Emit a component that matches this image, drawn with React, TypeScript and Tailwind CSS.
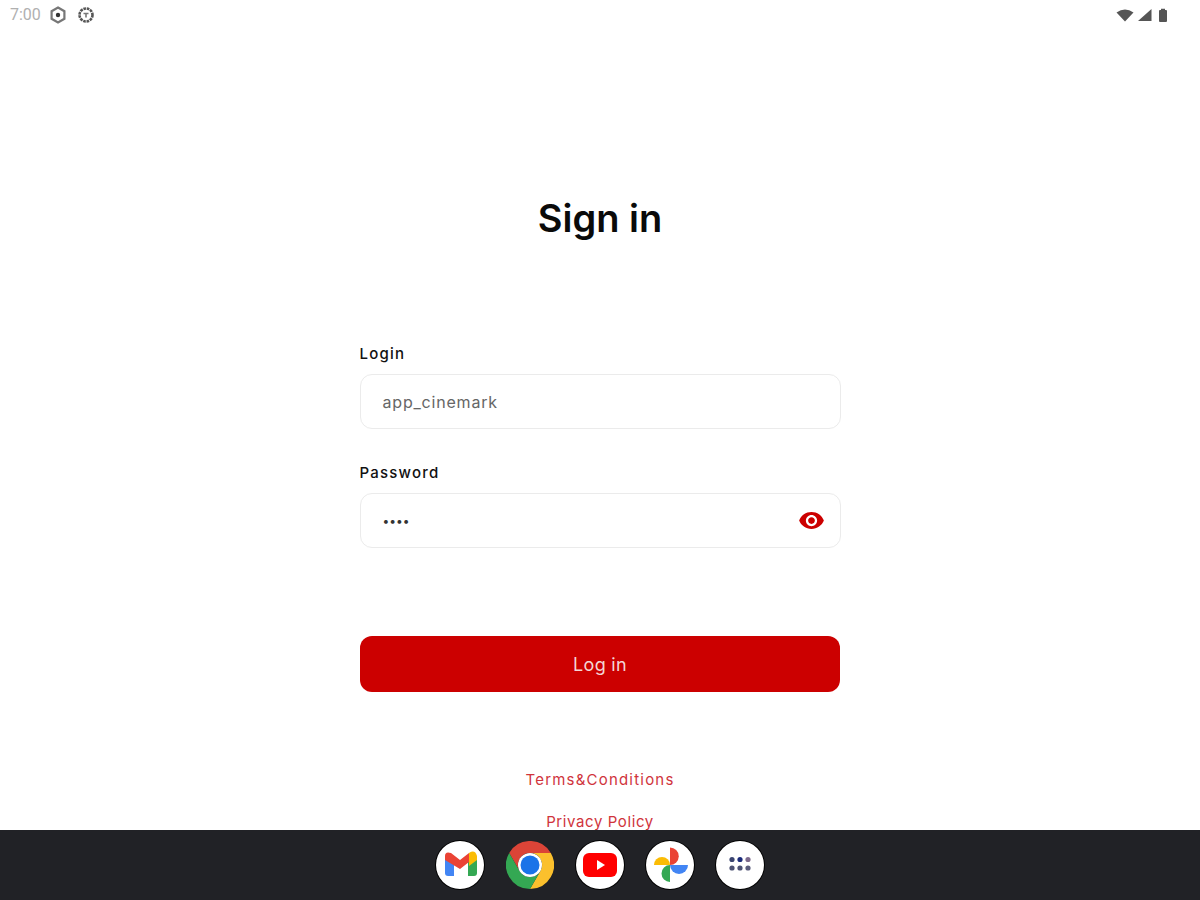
import { MdVisibility } from "react-icons/md";

const fontClass = "font-['Inter','Noto_Sans',sans-serif]";

const StatusBar = () => (
  <div className="flex h-[30px] shrink-0 items-center justify-between pl-[10px] pr-[32px]">
    <div className="flex items-center">
      <span className="w-[32px] text-[16px] text-[#b0b0b0] font-['Roboto',sans-serif]">7:00</span>
      <svg width="18" height="18" viewBox="0 0 18 18" className="ml-[7px]">
        <path d="M9 1.500l6.400 3.700v7.600L9 16.500l-6.400-3.700V5.200z" fill="none" stroke="#777" strokeWidth="2.200" />
        <circle cx="9" cy="9" r="2.200" fill="#333" />
      </svg>
      <svg width="18" height="18" viewBox="0 0 18 18" className="ml-[10px]">
        <circle cx="9" cy="9" r="6.500" fill="none" stroke="#555" strokeWidth="2.600" strokeDasharray="2.600 0.800" />
        <path d="M6.500 7.500h5M9 7.500v4" stroke="#777" strokeWidth="1.600" fill="none" />
      </svg>
    </div>
    <div className="flex items-center">
      <svg width="18" height="14" viewBox="0 0 18 14">
        <path d="M0.500 4.500Q9 -1.500 17.500 4.500L9 13.500z" fill="#555" />
      </svg>
      <svg width="17" height="14" viewBox="0 0 17 14" className="ml-[2px]">
        <path d="M15.500 1v12H2z" fill="#555" />
      </svg>
      <svg width="10" height="14" viewBox="0 0 10 14" className="ml-[5px]">
        <path d="M1 3q0-1 1-1h1V.8h4V2h1q1 0 1 1v10q0 1-1 1H2q-1 0-1-1z" fill="#555" />
      </svg>
    </div>
  </div>
);

const Field = ({ label, value, muted, trailing }: { label: string; value: string; muted?: boolean; trailing?: boolean }) => (
  <div className="flex flex-col">
    <label className="h-[30px] text-[15px] leading-[20px] font-medium tracking-[1.200px] text-[#111]">{label}</label>
    <div className="flex h-[55px] w-[481px] items-center justify-between rounded-[12px] border border-[#ebebeb] pl-[22px] pr-[15px]">
      {muted ? (
        <span className="text-[16px] tracking-[0.800px] text-[#666]">{value}</span>
      ) : (
        <span className="text-[12px] tracking-[0px] text-[#333]">{value}</span>
      )}
      {trailing && <MdVisibility size={27} color="#cc0000" />}
    </div>
  </div>
);

const GmailIcon = () => (
  <svg width="48" height="48" viewBox="0 0 48 48">
    <path d="M9 16v16q0 3 3 3h6V20z" fill="#4285f4" />
    <path d="M32 35h6q3 0 3-3V16l-9 5z" fill="#34a853" />
    <path d="M9 19v-4q0-5 6-3l9 7 9-7v9l-9 7z" fill="#ea4335" />
    <path d="M33 12q6-4 8 3v4l-8 6z" fill="#fbbc04" />
  </svg>
);

const ChromeIcon = () => (
  <svg width="48" height="48" viewBox="0 0 48 48">
    <path d="M3.200 12A24 24 0 0 1 44.800 12H24A12 12 0 0 0 13.600 30z" fill="#db4437" />
    <path d="M44.800 12A24 24 0 0 1 24 48L34.400 30A12 12 0 0 0 24 12z" fill="#fbc02d" />
    <path d="M3.200 12A24 24 0 0 0 24 48L34.400 30A12 12 0 0 1 13.600 30z" fill="#34a853" />
    <circle cx="24" cy="24" r="12" fill="#ffffff" />
    <circle cx="24" cy="24" r="9.500" fill="#1a73e8" />
  </svg>
);

const YoutubeIcon = () => (
  <svg width="48" height="48" viewBox="0 0 48 48">
    <rect x="7" y="12" width="34" height="24" rx="6" fill="#ff0000" />
    <path d="M21 19l8 5-8 5z" fill="#ffffff" />
  </svg>
);

const PhotosIcon = () => (
  <svg width="48" height="48" viewBox="0 0 48 48">
    <path d="M24 24V6.500A8.700 8.700 0 0 1 24 24z" fill="#ea4335" />
    <path d="M24 24H8A8 8 0 0 1 24 24z" fill="#fbbc04" />
    <path d="M24 24H42A9 9 0 0 1 24 24z" fill="#4285f4" />
    <path d="M24 24V41A8.500 8.500 0 0 1 24 24z" fill="#34a853" />
  </svg>
);

const AppsIcon = () => (
  <svg width="48" height="48" viewBox="0 0 48 48">
    <circle cx="16" cy="18.500" r="2.600" fill="#3a4470" />
    <circle cx="24" cy="18.500" r="2.600" fill="#1a2a7a" />
    <circle cx="32" cy="18.500" r="2.600" fill="#7d6a8c" />
    <circle cx="16" cy="27" r="2.600" fill="#4d5274" />
    <circle cx="24" cy="27" r="2.600" fill="#4d5274" />
    <circle cx="32" cy="27" r="2.600" fill="#5a5c7c" />
  </svg>
);

const DockItem = ({ children, bare }: { children: React.ReactNode; bare?: boolean }) => (
  <div className={bare ? "h-[48px] w-[48px] rounded-full" : "h-[48px] w-[48px] rounded-full bg-white ring-1 ring-black"}>
    {children}
  </div>
);

const App = () => {
  return (
    <div className={`flex h-[900px] w-[1200px] flex-col overflow-hidden bg-white ${fontClass}`}>
      <StatusBar />
      <main className="flex min-h-0 flex-1 flex-col items-center overflow-hidden">
        <h1 className="mt-[162px] h-[52px] shrink-0 text-[38px] leading-[52px] font-semibold text-[#0a0a0a]">Sign in</h1>
        <div className="mt-[100px] flex shrink-0 flex-col gap-[34px]">
          <Field label="Login" value="app_cinemark" muted />
          <Field label="Password" value="••••" trailing />
        </div>
        <button className="mt-[88px] h-[56px] w-[480px] shrink-0 rounded-[12px] bg-[#cc0000] text-[18px] tracking-[0.300px] text-[#f3d6d6]">Log in</button>
        <a className="mt-[77px] shrink-0 text-[15px] leading-[22px] tracking-[1.200px] text-[#d0343c]">Terms&amp;Conditions</a>
        <a className="mt-[20px] shrink-0 text-[15px] leading-[22px] tracking-[0.600px] text-[#d0343c]">Privacy Policy</a>
      </main>
      <footer className="flex h-[70px] shrink-0 items-center justify-center gap-[22px] bg-[#212226]">
        <DockItem><GmailIcon /></DockItem>
        <DockItem bare><ChromeIcon /></DockItem>
        <DockItem><YoutubeIcon /></DockItem>
        <DockItem><PhotosIcon /></DockItem>
        <DockItem><AppsIcon /></DockItem>
      </footer>
    </div>
  );
};

export default App;
